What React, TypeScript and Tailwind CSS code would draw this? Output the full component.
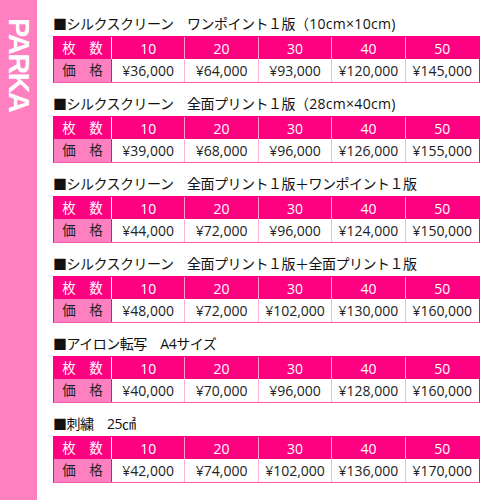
const sections = [
  {
    title: '■シルクスクリーン　ワンポイント１版',
    note: '（10cm×10cm)',
    prices: ['¥36,000', '¥64,000', '¥93,000', '¥120,000', '¥145,000'],
  },
  {
    title: '■シルクスクリーン　全面プリント１版',
    note: '（28cm×40cm)',
    prices: ['¥39,000', '¥68,000', '¥96,000', '¥126,000', '¥155,000'],
  },
  {
    title: '■シルクスクリーン　全面プリント１版＋ワンポイント１版',
    prices: ['¥44,000', '¥72,000', '¥96,000', '¥124,000', '¥150,000'],
  },
  {
    title: '■シルクスクリーン　全面プリント１版＋全面プリント１版',
    prices: ['¥48,000', '¥72,000', '¥102,000', '¥130,000', '¥160,000'],
  },
  {
    title: '■アイロン転写　A4サイズ',
    prices: ['¥40,000', '¥70,000', '¥96,000', '¥128,000', '¥160,000'],
  },
  {
    title: '■刺繍　25㎠',
    prices: ['¥42,000', '¥74,000', '¥102,000', '¥136,000', '¥170,000'],
  },
]

const quantities = ['10', '20', '30', '40', '50']

const PriceTable = ({ prices }: { prices: string[] }) => (
  <div className="w-[427px] border border-[#ff0080] border-b-[#ff5aad]">
    {/* quantity row */}
    <div className="grid h-[22px] grid-cols-[58px_repeat(5,1fr)] bg-[#ff0080] text-white">
      <div className="flex items-center justify-center border-r border-[#ffffff] text-[13.5px]">枚　数</div>
      {quantities.map((q, i) => (
        <div
          key={q}
          className={`flex items-center justify-center text-[14px] ${i < 4 ? 'border-r border-[#ff9fd0]' : ''}`}
        >
          {q}
        </div>
      ))}
    </div>
    {/* price row */}
    <div className="grid h-[23px] grid-cols-[58px_repeat(5,1fr)] bg-white text-[#222]">
      <div className="flex items-center justify-center border-r border-[#ff0080] bg-[#ff80c0] text-[13.5px]">価　格</div>
      {prices.map((p, i) => (
        <div
          key={p + i}
          className={`flex items-center justify-center text-[14px] ${i < 4 ? 'border-r border-[#ffb3d9]' : ''}`}
        >
          {p}
        </div>
      ))}
    </div>
  </div>
)

export default function App() {
  return (
    <div
      className="flex h-[500px] w-[500px] bg-white"
      style={{ fontFamily: '"Open Sans", "Noto Sans CJK JP", sans-serif' }}
    >
      {/* side label */}
      <div className="flex w-[37px] shrink-0 justify-center bg-[#ff80c0] pt-[18px]">
        <div
          className="text-[29px] font-bold leading-none tracking-[-1.5px] text-white [writing-mode:vertical-rl]"
          style={{ fontFamily: '"Liberation Sans", Arial, sans-serif' }}
        >
          PARKA
        </div>
      </div>

      <div className="flex flex-col gap-[11px] pl-[16px] pt-[14px]">
        {sections.map((s) => (
          <div key={s.title} className="flex flex-col gap-[2px]">
            <div className="h-[20px] text-[14px] leading-[20px] tracking-[-0.5px] text-[#111]">
              {s.title}
              {s.note && <span className="tracking-[0.3px]">{s.note}</span>}
            </div>
            <PriceTable prices={s.prices} />
          </div>
        ))}
      </div>
    </div>
  )
}
